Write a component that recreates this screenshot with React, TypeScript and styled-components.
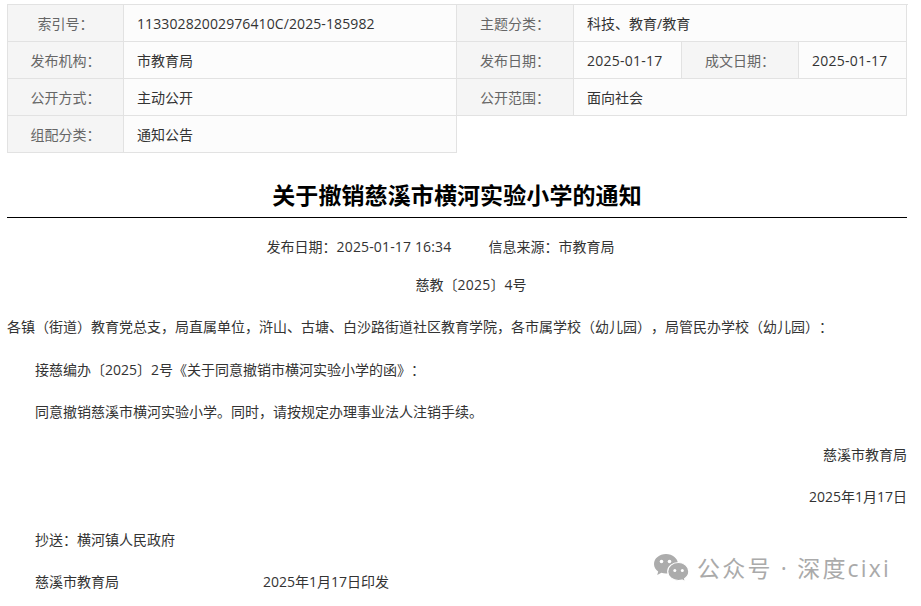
import React from "react";
import styled, { createGlobalStyle } from "styled-components";

const Global = createGlobalStyle`
  html, body { margin: 0; padding: 0; background: #fff; }
  body { font-family: "Open Sans", "Noto Sans CJK SC", sans-serif; text-spacing-trim: space-all; }
`;

const Page = styled.div`
  position: relative;
  width: 921px;
  height: 606px;
  overflow: hidden;
  box-sizing: border-box;
  padding: 4px 14px 0 7px;
  font-size: 14px;
  color: #333;
`;

const Meta = styled.div`
  display: grid;
  grid-template-columns: 116px 333px 117px 108px 117px 108px;
  grid-auto-rows: 37px;
  width: 900px;
  border-top: 1px solid #e2e2e2;
  border-left: 1px solid #e2e2e2;
  box-sizing: content-box;
`;

const Label = styled.div`
  display: flex;
  align-items: center;
  justify-content: center;
  box-sizing: border-box;
  background: #f5f5f5;
  color: #666;
  border-right: 1px solid #e2e2e2;
  border-bottom: 1px solid #e2e2e2;
`;

const Value = styled.div<{ $span?: number }>`
  display: flex;
  align-items: center;
  box-sizing: border-box;
  padding-left: 13px;
  background: #fcfcfc;
  color: #333;
  border-right: 1px solid #e2e2e2;
  border-bottom: 1px solid #e2e2e2;
  grid-column: span ${(p) => p.$span ?? 1};
`;

const Digits = styled.span<{ $spacing?: number }>`
  letter-spacing: ${(p) => p.$spacing ?? 0.1}px;
`;

const Title = styled.h1`
  margin: 23px 0 0;
  height: 41px;
  line-height: 38px;
  font-size: 23px;
  font-weight: 700;
  letter-spacing: 0.1px;
  text-align: center;
  color: #000;
  border-bottom: 1px solid #000;
`;

const Info = styled.div`
  display: flex;
  justify-content: center;
  gap: 37px;
  margin-top: 18px;
  padding-right: 33px;
  line-height: 22px;
`;

const Doc = styled.div`
  margin-top: 15.5px;
`;

const Para = styled.p<{ $align?: string; $indent?: boolean }>`
  margin: 0;
  height: 42.5px;
  line-height: 22px;
  text-align: ${(p) => p.$align ?? "left"};
  text-indent: ${(p) => (p.$indent ? "28px" : "0")};
  white-space: pre;
`;

const Issuer = styled.span`
  display: inline-block;
  width: 228px;
  text-indent: 0;
`;

const Watermark = styled.div`
  position: absolute;
  left: 654px;
  top: 553px;
  display: flex;
  align-items: center;
  gap: 7px;
  font-size: 23px;
  letter-spacing: 2.2px;
  line-height: 30px;
  color: #aaa;
  white-space: nowrap;
`;

const WeChat = () => (
  <svg width="36" height="30" viewBox="0 0 36 30" aria-hidden="true">
    <path fill="#acacac" d="M12 1C5.400 1 0 5.400 0 10.900c0 3 1.600 5.600 4.200 7.500L3.200 22l4.200-2.200c1.400.5 3 .8 4.600.8 6.600 0 12-4.400 12-9.700S18.600 1 12 1z" />
    <path fill="#acacac" stroke="#fff" strokeWidth="1.200" d="M24.500 9.500c-6 0-10.800 4-10.800 9s4.800 9 10.800 9c1.200 0 2.400-.2 3.500-.5l3.500 1.900-.9-3.200c2.600-1.700 4.200-4.300 4.200-7.200 0-5-4.800-9-10.300-9z" />
    <circle cx="7.500" cy="8.500" r="1.800" fill="#fff" />
    <circle cx="15.500" cy="8.500" r="1.800" fill="#fff" />
    <circle cx="20.800" cy="17.500" r="1.500" fill="#fff" />
    <circle cx="28.300" cy="17.500" r="1.500" fill="#fff" />
  </svg>
);

export default function App() {
  return (
    <>
      <Global />
      <Page>
        <Meta>
          <Label>索引号：</Label>
          <Value><Digits>11330282002976410C/2025-185982</Digits></Value>
          <Label>主题分类：</Label>
          <Value $span={3}>科技、教育/教育</Value>

          <Label>发布机构：</Label>
          <Value>市教育局</Value>
          <Label>发布日期：</Label>
          <Value><Digits $spacing={0.25}>2025-01-17</Digits></Value>
          <Label>成文日期：</Label>
          <Value><Digits $spacing={0.25}>2025-01-17</Digits></Value>

          <Label>公开方式：</Label>
          <Value>主动公开</Value>
          <Label>公开范围：</Label>
          <Value $span={3}>面向社会</Value>

          <Label>组配分类：</Label>
          <Value>通知公告</Value>
        </Meta>
        <Title>关于撤销慈溪市横河实验小学的通知</Title>
        <Info>
          <span>发布日期：<Digits $spacing={0.15}>2025-01-17 16:34</Digits></span>
          <span>信息来源：市教育局</span>
        </Info>
        <Doc>
          <Para $align="center" $indent>慈教〔<Digits $spacing={0.2}>2025</Digits>〕4号</Para>
          <Para>各镇（街道）教育党总支，局直属单位，浒山、古塘、白沙路街道社区教育学院，各市属学校（幼儿园），局管民办学校（幼儿园）：</Para>
          <Para $indent>接慈编办〔2025〕2号《关于同意撤销市横河实验小学的函》：</Para>
          <Para $indent>同意撤销慈溪市横河实验小学。同时，请按规定办理事业法人注销手续。</Para>
          <Para $align="right">慈溪市教育局</Para>
          <Para $align="right">2025年1月17日</Para>
          <Para $indent>抄送：横河镇人民政府</Para>
          <Para $indent><Issuer>慈溪市教育局</Issuer>2025年1月17日印发</Para>
        </Doc>
        <Watermark>
          <WeChat />
          <span>公众号 · 深度cixi</span>
        </Watermark>
      </Page>
    </>
  );
}
